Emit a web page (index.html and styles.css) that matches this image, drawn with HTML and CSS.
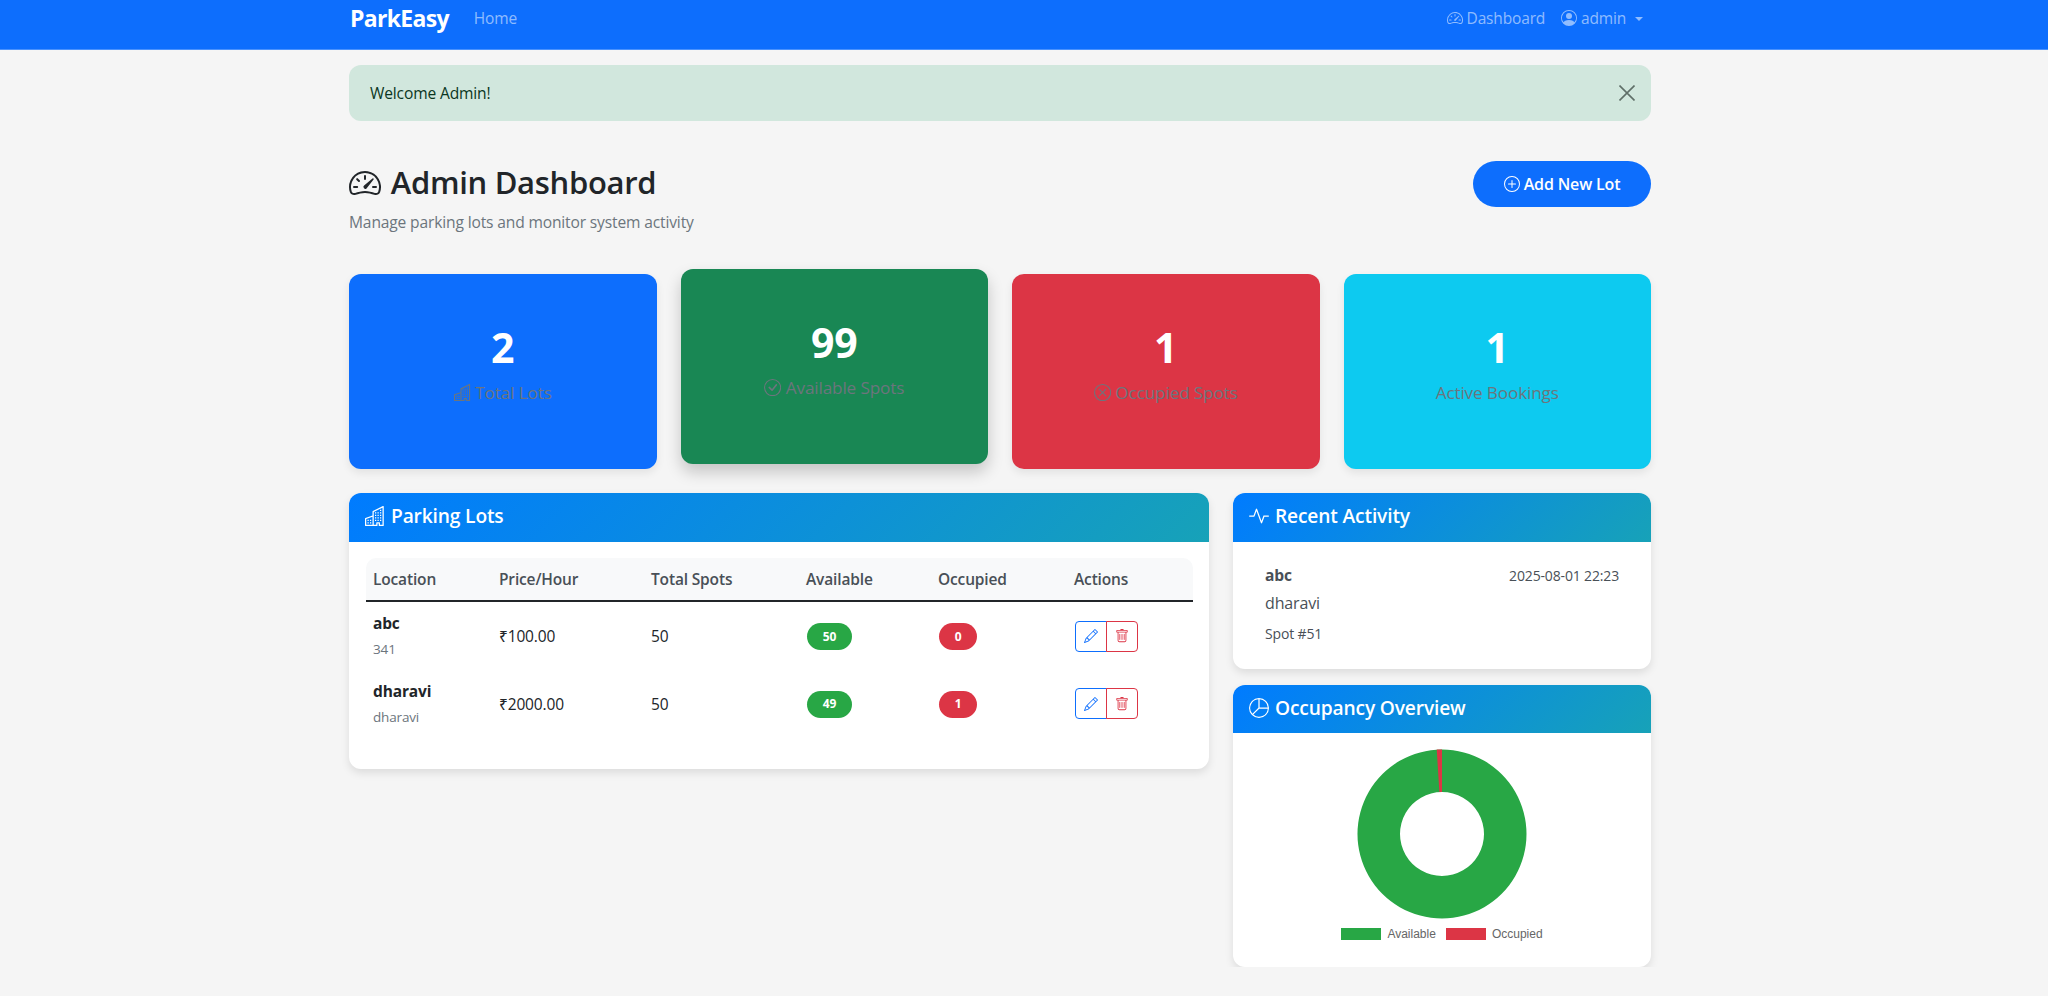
FILE: index.html
```html
<!DOCTYPE html>
<html lang="en">
<head>
<meta charset="utf-8">
<title>ParkEasy Admin Dashboard</title>
<link rel="stylesheet" href="styles.css">
</head>
<body>
<svg class="sprite" aria-hidden="true">
  <symbol id="i-speed" viewBox="0 0 16 16"><path d="M8 4a.5.5 0 0 1 .5.5V6a.5.5 0 0 1-1 0V4.5A.5.5 0 0 1 8 4M3.732 5.732a.5.5 0 0 1 .707 0l.915.914a.5.5 0 1 1-.708.708l-.914-.915a.5.5 0 0 1 0-.707M2 10a.5.5 0 0 1 .5-.5h1.586a.5.5 0 0 1 0 1H2.5A.5.5 0 0 1 2 10m9.5 0a.5.5 0 0 1 .5-.5h1.5a.5.5 0 0 1 0 1H12a.5.5 0 0 1-.5-.5m.754-4.246a.39.39 0 0 0-.527-.02L7.547 9.31a.91.91 0 1 0 1.302 1.258l3.434-4.297a.39.39 0 0 0-.029-.518z"/><path fill-rule="evenodd" d="M0 10a8 8 0 1 1 15.547 2.661c-.442 1.253-1.845 1.602-2.932 1.25C11.309 13.488 9.475 13 8 13c-1.474 0-3.31.488-4.615.911-1.087.352-2.49.003-2.932-1.25A8 8 0 0 1 0 10m8-7a7 7 0 0 0-6.603 9.329c.203.575.923.876 1.68.63C4.397 12.533 6.358 12 8 12s3.604.532 4.923.96c.757.245 1.477-.056 1.68-.631A7 7 0 0 0 8 3"/></symbol>
  <symbol id="i-person" viewBox="0 0 16 16"><path d="M11 6a3 3 0 1 1-6 0 3 3 0 0 1 6 0"/><path fill-rule="evenodd" d="M0 8a8 8 0 1 1 16 0A8 8 0 0 1 0 8m8-7a7 7 0 0 0-5.468 11.37C3.242 11.226 4.805 10 8 10s4.757 1.225 5.468 2.37A7 7 0 0 0 8 1"/></symbol>
  <symbol id="i-plus" viewBox="0 0 16 16"><path d="M8 15A7 7 0 1 1 8 1a7 7 0 0 1 0 14m0 1A8 8 0 1 0 8 0a8 8 0 0 0 0 16"/><path d="M8 4a.5.5 0 0 1 .5.5v3h3a.5.5 0 0 1 0 1h-3v3a.5.5 0 0 1-1 0v-3h-3a.5.5 0 0 1 0-1h3v-3A.5.5 0 0 1 8 4"/></symbol>
  <symbol id="i-buildings" viewBox="0 0 16 16"><path d="M14.763.075A.5.5 0 0 1 15 .5v15a.5.5 0 0 1-.5.5h-3a.5.5 0 0 1-.5-.5V14h-1v1.5a.5.5 0 0 1-.5.5h-9a.5.5 0 0 1-.5-.5V10a.5.5 0 0 1 .342-.474L6 7.64V4.5a.5.5 0 0 1 .276-.447l8-4a.5.5 0 0 1 .487.022M6 8.694 1 10.36V15h5zM7 15h2v-1.5a.5.5 0 0 1 .5-.5h2a.5.5 0 0 1 .5.5V15h2V1.309l-7 3.5z"/><path d="M2 11h1v1H2zm2 0h1v1H4zm-2 2h1v1H2zm2 0h1v1H4zm4-4h1v1H8zm2 0h1v1h-1zm-2 2h1v1H8zm2 0h1v1h-1zm2-2h1v1h-1zm0 2h1v1h-1zM8 7h1v1H8zm2 0h1v1h-1zm2 0h1v1h-1zM8 5h1v1H8zm2 0h1v1h-1zm2 0h1v1h-1zm0-2h1v1h-1z"/></symbol>
  <symbol id="i-check" viewBox="0 0 16 16"><path d="M8 15A7 7 0 1 1 8 1a7 7 0 0 1 0 14m0 1A8 8 0 1 0 8 0a8 8 0 0 0 0 16"/><path d="m10.97 4.97-.02.022-3.473 4.425-2.093-2.094a.75.75 0 0 0-1.06 1.06L6.97 11.03a.75.75 0 0 0 1.079-.02l3.992-4.99a.75.75 0 0 0-1.071-1.05"/></symbol>
  <symbol id="i-x" viewBox="0 0 16 16"><path d="M8 15A7 7 0 1 1 8 1a7 7 0 0 1 0 14m0 1A8 8 0 1 0 8 0a8 8 0 0 0 0 16"/><path d="M4.646 4.646a.5.5 0 0 1 .708 0L8 7.293l2.646-2.647a.5.5 0 0 1 .708.708L8.707 8l2.647 2.646a.5.5 0 0 1-.708.708L8 8.707l-2.646 2.647a.5.5 0 0 1-.708-.708L7.293 8 4.646 5.354a.5.5 0 0 1 0-.708"/></symbol>
  <symbol id="i-pencil" viewBox="0 0 16 16"><path d="M12.146.146a.5.5 0 0 1 .708 0l3 3a.5.5 0 0 1 0 .708l-10 10a.5.5 0 0 1-.168.11l-5 2a.5.5 0 0 1-.65-.65l2-5a.5.5 0 0 1 .11-.168zM11.207 2.5 13.5 4.793 14.793 3.5 12.5 1.207zm1.586 3L10.5 3.207 4 9.707V10h.5a.5.5 0 0 1 .5.5v.5h.5a.5.5 0 0 1 .5.5v.5h.293zm-9.761 5.175-.106.106-1.528 3.821 3.821-1.528.106-.106A.5.5 0 0 1 5 12.5V12h-.5a.5.5 0 0 1-.5-.5V11h-.5a.5.5 0 0 1-.468-.325"/></symbol>
  <symbol id="i-trash" viewBox="0 0 16 16"><path d="M5.5 5.5A.5.5 0 0 1 6 6v6a.5.5 0 0 1-1 0V6a.5.5 0 0 1 .5-.5m2.5 0a.5.5 0 0 1 .5.5v6a.5.5 0 0 1-1 0V6a.5.5 0 0 1 .5-.5m3 .5a.5.5 0 0 0-1 0v6a.5.5 0 0 0 1 0z"/><path d="M14.5 3a1 1 0 0 1-1 1H13v9a2 2 0 0 1-2 2H5a2 2 0 0 1-2-2V4h-.5a1 1 0 0 1-1-1V2a1 1 0 0 1 1-1H6a1 1 0 0 1 1-1h2a1 1 0 0 1 1 1h3.5a1 1 0 0 1 1 1zM4.118 4 4 4.059V13a1 1 0 0 0 1 1h6a1 1 0 0 0 1-1V4.059L11.882 4zM2.5 3h11V2h-11z"/></symbol>
  <symbol id="i-activity" viewBox="0 0 16 16"><path fill-rule="evenodd" d="M6 2a.5.5 0 0 1 .47.33L10 12.036l1.53-4.208A.5.5 0 0 1 12 7.5h3.5a.5.5 0 0 1 0 1h-3.15l-1.88 5.17a.5.5 0 0 1-.94 0L6 3.964 4.47 8.171A.5.5 0 0 1 4 8.5H.5a.5.5 0 0 1 0-1h3.15l1.88-5.17A.5.5 0 0 1 6 2"/></symbol>
  <symbol id="i-pie" viewBox="0 0 16 16"><path d="M7.5 1.018a7 7 0 0 0-4.79 11.566L7.5 7.793zm1 0V7.5h6.482A7 7 0 0 0 8.5 1.018M14.982 8.5H8.207l-4.79 4.79A7 7 0 0 0 14.982 8.5M0 8a8 8 0 1 1 16 0A8 8 0 0 1 0 8"/></symbol>
</svg>

<nav class="navbar">
  <div class="nav-inner">
    <a class="brand">ParkEasy</a>
    <a class="nav-link home-link">Home</a>
    <a class="nav-link dash-link"><svg class="icon"><use href="#i-speed"/></svg> Dashboard</a>
    <a class="nav-link user-link"><svg class="icon"><use href="#i-person"/></svg> admin <span class="caret"></span></a>
  </div>
</nav>

<main class="container">
  <div class="alert">
    <span>Welcome Admin!</span>
    <svg class="alert-close" viewBox="0 0 16 16"><path d="M.5.5 15.5 15.5M15.5.5.5 15.5"/></svg>
  </div>

  <header class="page-head">
    <div>
      <h1 class="page-title"><svg class="icon title-icon"><use href="#i-speed"/></svg> Admin Dashboard</h1>
      <p class="page-sub">Manage parking lots and monitor system activity</p>
    </div>
    <a class="add-btn"><svg class="icon"><use href="#i-plus"/></svg> Add New Lot</a>
  </header>

  <section class="stats">
    <div class="stat stat-blue">
      <div class="stat-num">2</div>
      <div class="stat-label"><svg class="icon"><use href="#i-buildings"/></svg> Total Lots</div>
    </div>
    <div class="stat stat-green">
      <div class="stat-num">99</div>
      <div class="stat-label"><svg class="icon"><use href="#i-check"/></svg> Available Spots</div>
    </div>
    <div class="stat stat-red">
      <div class="stat-num">1</div>
      <div class="stat-label"><svg class="icon"><use href="#i-x"/></svg> Occupied Spots</div>
    </div>
    <div class="stat stat-cyan">
      <div class="stat-num">1</div>
      <div class="stat-label">Active Bookings</div>
    </div>
  </section>

  <section class="panels">
    <div class="card card-lots">
      <h2 class="card-head"><svg class="icon"><use href="#i-buildings"/></svg> Parking Lots</h2>
      <div class="card-body lots-body">
        <table class="lots">
          <colgroup>
            <col class="c1"><col class="c2"><col class="c3"><col class="c4"><col class="c5"><col class="c6">
          </colgroup>
          <thead>
            <tr><th>Location</th><th>Price/Hour</th><th>Total Spots</th><th>Available</th><th>Occupied</th><th>Actions</th></tr>
          </thead>
          <tbody>
            <tr>
              <td><strong class="lot-name">abc</strong><small class="lot-sub">341</small></td>
              <td>₹100.00</td>
              <td>50</td>
              <td><span class="pill pill-green">50</span></td>
              <td><span class="pill pill-red">0</span></td>
              <td><div class="btns"><a class="act act-edit"><svg class="icon"><use href="#i-pencil"/></svg></a><a class="act act-del"><svg class="icon"><use href="#i-trash"/></svg></a></div></td>
            </tr>
            <tr>
              <td><strong class="lot-name">dharavi</strong><small class="lot-sub">dharavi</small></td>
              <td>₹2000.00</td>
              <td>50</td>
              <td><span class="pill pill-green">49</span></td>
              <td><span class="pill pill-red">1</span></td>
              <td><div class="btns"><a class="act act-edit"><svg class="icon"><use href="#i-pencil"/></svg></a><a class="act act-del"><svg class="icon"><use href="#i-trash"/></svg></a></div></td>
            </tr>
          </tbody>
        </table>
      </div>
    </div>

    <div class="side">
      <div class="card">
        <h2 class="card-head"><svg class="icon"><use href="#i-activity"/></svg> Recent Activity</h2>
        <div class="card-body activity-body">
          <div class="activity-top">
            <strong class="activity-name">abc</strong>
            <span class="activity-time">2025-08-01 22:23</span>
          </div>
          <div class="activity-place">dharavi</div>
          <div class="activity-spot">Spot #51</div>
        </div>
      </div>

      <div class="card">
        <h2 class="card-head head-occ"><svg class="icon"><use href="#i-pie"/></svg> Occupancy Overview</h2>
        <div class="chart-body">
          <svg class="donut" viewBox="-85 -85 170 170">
            <path class="slice-green" fill-rule="evenodd" d="M0-84.5A84.5 84.5 0 1 1-.01-84.5ZM0-42A42 42 0 1 0 .01-42Z"/>
            <path class="slice-red" d="M-5.3-84.4A84.5 84.5 0 0 1 0-84.5V-42H-2.6Z"/>
          </svg>
          <div class="legend">
            <span class="swatch swatch-green"></span><span class="legend-text">Available</span>
            <span class="swatch swatch-red"></span><span class="legend-text">Occupied</span>
          </div>
        </div>
      </div>
    </div>
  </section>
</main>
</body>
</html>
```
FILE: styles.css
```css
* { box-sizing: border-box; }
html, body { margin: 0; padding: 0; }
body {
  background: #f5f5f5;
  color: #212529;
  font-family: "Open Sans", "Noto Sans", sans-serif;
  font-size: 15.6px;
  line-height: 24px;
  letter-spacing: -0.01em;
}
.sprite { display: none; }
.icon { width: 1em; height: 1em; fill: currentColor; vertical-align: -0.125em; }

.navbar { background: #0d6efd; height: 50px; border-bottom: 1px solid #4a92fd; }
.nav-inner { display: flex; align-items: center; width: 1302px; margin-left: 349px; height: 36px; }
.brand { color: #fff; font-size: 23px; font-weight: 700; letter-spacing: -0.03em; margin-left: 1px; }
.nav-link { color: rgba(255,255,255,.55); font-size: 15.5px; }
.nav-link .icon { width: 16px; height: 16px; }
.home-link { margin-left: 25px; }
.dash-link { margin-left: auto; margin-right: 16px; }
.user-link { margin-right: 8px; }
.caret {
  display: inline-block; width: 0; height: 0; margin-left: 5px; vertical-align: 3px;
  border-top: 4.8px solid currentColor; border-left: 4.8px solid transparent; border-right: 4.8px solid transparent;
}

.container { width: 1302px; margin-left: 349px; }

.alert {
  display: flex; align-items: center; justify-content: space-between;
  height: 56px; margin-top: 15px; padding: 0 16px 0 21px;
  background: #d1e7dd; color: #0a3622; border-radius: 12px;
}
.alert-close { width: 16px; height: 16px; fill: none; stroke: #5f6f68; stroke-width: 1.6; }

.page-head { display: flex; justify-content: space-between; align-items: flex-start; margin-top: 40px; }
.page-title { margin: 2px 0 9px; font-size: 31px; line-height: 38px; font-weight: 550; letter-spacing: -0.01em; }
.title-icon { margin-right: 2px; width: 32px; height: 32px; vertical-align: -5px; }
.page-sub { margin: 0; color: #6c757d; font-size: 15.6px; }
.add-btn {
  display: flex; align-items: center; justify-content: center; gap: 4px;
  width: 178px; height: 46px; border-radius: 23px;
  background: #0d6efd; color: #fff; font-size: 16px; font-weight: 600;
}
.add-btn .icon { width: 16px; height: 16px; }

.stats { display: grid; grid-template-columns: repeat(4, 1fr); gap: 24px; margin-top: 40px; }
.stat {
  height: 195px; padding-top: 49px; border-radius: 12px; text-align: center;
  box-shadow: 0 4px 8px rgba(0,0,0,.08);
}
.stat-num { color: #fff; font-size: 41px; line-height: 48px; font-weight: 700; }
.stat-label { margin-top: 10px; color: #6c757d; font-size: 17.2px; }
.stat-blue { background: #0d6efd; }
.stat-green { background: #198754; transform: translateY(-5px); box-shadow: 0 8px 16px rgba(0,0,0,.2); }
.stat-red { background: #dc3545; }
.stat-cyan { background: #0dcaf0; }

.panels { display: grid; grid-template-columns: 860px 418px; gap: 24px; margin-top: 24px; align-items: start; }
.side { display: flex; flex-direction: column; gap: 16px; }
.card { background: #fff; border-radius: 12px; box-shadow: 0 4px 8px rgba(0,0,0,.1); overflow: hidden; }
.card-head {
  display: flex; align-items: center; gap: 6px;
  height: 49px; margin: 0; padding: 0 16px 4px;
  background: linear-gradient(135deg, #007bff, #17a2b8);
  color: #fff; font-size: 19.2px; font-weight: 600;
}
.head-occ { height: 48px; padding-bottom: 2px; }
.card-head .icon { width: 20px; height: 20px; }

.lots-body { padding: 16px 16px 32px 17px; }
.lots { width: 827px; border-collapse: separate; border-spacing: 0; table-layout: fixed; }
.c1 { width: 126px; } .c2 { width: 152px; } .c3 { width: 155px; }
.c4 { width: 132px; } .c5 { width: 136px; } .c6 { width: 126px; }
.lots th {
  height: 44px; padding: 0 7px; text-align: left;
  background: #f8f9fa; color: #495057; font-size: 15.5px; font-weight: 600;
  border-bottom: 2px solid #212529;
}
.lots th:first-child { border-top-left-radius: 10px; }
.lots th:last-child { border-top-right-radius: 10px; }
.lots td { height: 67.5px; padding: 1px 7px 0; vertical-align: middle; font-size: 15.5px; }
.lot-name { display: block; font-weight: 700; line-height: 26px; }
.lot-sub { display: block; color: #6c757d; font-size: 13.5px; line-height: 26px; }
.pill {
  display: inline-flex; align-items: center; justify-content: center;
  height: 27px; margin-left: 1px; border-radius: 14px; color: #fff; font-size: 12px; font-weight: 700;
}
.pill-green { width: 45px; background: #28a745; }
.pill-red { width: 38px; background: #dc3545; }
.btns { display: flex; width: 63px; height: 31px; margin-left: 1px; }
.act {
  display: flex; align-items: center; justify-content: center; flex: 1;
  font-size: 14px; border: 1px solid;
}
.act-edit { color: #0d6efd; border-radius: 4px 0 0 4px; }
.act-del { color: #dc3545; border-radius: 0 4px 4px 0; margin-left: -1px; }

.activity-body { height: 127px; padding: 21px 32px 0; }
.activity-top { display: flex; justify-content: space-between; color: #495057; }
.activity-name { font-weight: 700; }
.activity-time { font-size: 14px; margin-top: 1px; }
.activity-place { margin-top: 3px; color: #495057; font-size: 16px; }
.activity-spot { margin-top: 7px; color: #495057; font-size: 14px; }

.chart-body { display: flex; flex-direction: column; align-items: center; height: 234px; padding-top: 16px; }
.donut { width: 170px; height: 170px; }
.slice-green { fill: #28a745; }
.slice-red { fill: #dc3545; }
.legend {
  display: flex; align-items: center; margin-top: 8px;
  font-family: "Liberation Sans", Arial, sans-serif; font-size: 12px; line-height: 14px; letter-spacing: 0; color: #666;
}
.swatch { width: 40px; height: 12px; margin-right: 6px; }
.swatch-red { margin-left: 10px; }
.swatch-green { background: #28a745; }
.swatch-red { background: #dc3545; }
```
